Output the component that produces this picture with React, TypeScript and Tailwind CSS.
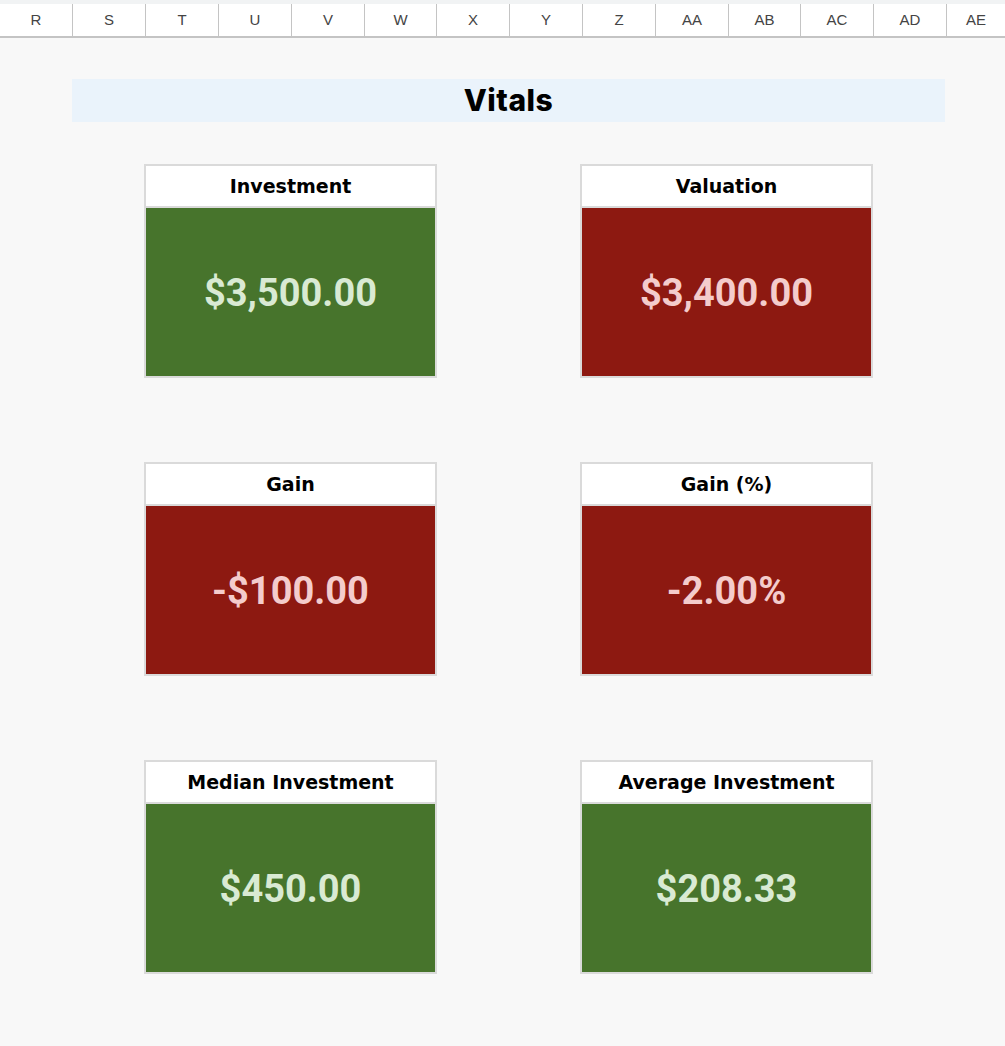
import React from 'react';

const columns = [
  { label: 'R', w: 'w-[73px]' },
  { label: 'S', w: 'w-[73px]' },
  { label: 'T', w: 'w-[73px]' },
  { label: 'U', w: 'w-[73px]' },
  { label: 'V', w: 'w-[73px]' },
  { label: 'W', w: 'w-[72px]' },
  { label: 'X', w: 'w-[73px]' },
  { label: 'Y', w: 'w-[73px]' },
  { label: 'Z', w: 'w-[73px]' },
  { label: 'AA', w: 'w-[73px]' },
  { label: 'AB', w: 'w-[72px]' },
  { label: 'AC', w: 'w-[73px]' },
  { label: 'AD', w: 'w-[73px]' },
];

type Tone = 'green' | 'red';

const vitals: { title: string; value: string; tone: Tone }[] = [
  { title: 'Investment', value: '$3,500.00', tone: 'green' },
  { title: 'Valuation', value: '$3,400.00', tone: 'red' },
  { title: 'Gain', value: '-$100.00', tone: 'red' },
  { title: 'Gain (%)', value: '-2.00%', tone: 'red' },
  { title: 'Median Investment', value: '$450.00', tone: 'green' },
  { title: 'Average Investment', value: '$208.33', tone: 'green' },
];

const VitalCard: React.FC<{ title: string; value: string; tone: Tone }> = ({ title, value, tone }) => (
  <div className="w-[293px] border-2 border-[#dadada] bg-white">
    <div className="h-[42px] flex items-center justify-center border-b-2 border-[#dadada] font-['DejaVu_Sans',sans-serif] font-bold text-[19px] text-black">
      {title}
    </div>
    <div
      className={
        tone === 'green'
          ? 'h-[168px] pt-[3px] flex items-center justify-center bg-[#47742c] text-[#d9ead3] font-["Roboto",sans-serif] font-bold text-[38px]'
          : 'h-[168px] pt-[3px] flex items-center justify-center bg-[#8d1911] text-[#f4cccc] font-["Roboto",sans-serif] font-bold text-[38px]'
      }
    >
      {value}
    </div>
  </div>
);

export default function App() {
  return (
    <div className="min-h-[1046px] bg-[#f8f8f8]">
      {/* Column header strip */}
      <div className="bg-[#f1f3f4] pt-[4px]">
        <div className="flex h-[34px] bg-white border-b-2 border-[#c4c4c4] font-['Liberation_Sans',Arial,sans-serif] text-[15px] text-[#444]">
          {columns.map(c => (
            <div key={c.label} className={`${c.w} shrink-0 flex items-center justify-center border-r border-[#c4c4c4]`}>
              {c.label}
            </div>
          ))}
          <div className="flex-1 flex items-center justify-center">AE</div>
        </div>
      </div>

      {/* Title */}
      <div className="ml-[72px] mt-[41px] w-[873px] h-[43px] bg-[#eaf3fb] flex items-center justify-center">
        <h1 className="font-['Inter',sans-serif] font-extrabold text-[30px] tracking-[0.5px] text-black">Vitals</h1>
      </div>

      {/* Cards */}
      <div className="ml-[144px] mt-[42px] grid grid-cols-[293px_293px] gap-x-[143px] gap-y-[84px]">
        {vitals.map(v => (
          <VitalCard key={v.title} title={v.title} value={v.value} tone={v.tone} />
        ))}
      </div>
    </div>
  );
}
